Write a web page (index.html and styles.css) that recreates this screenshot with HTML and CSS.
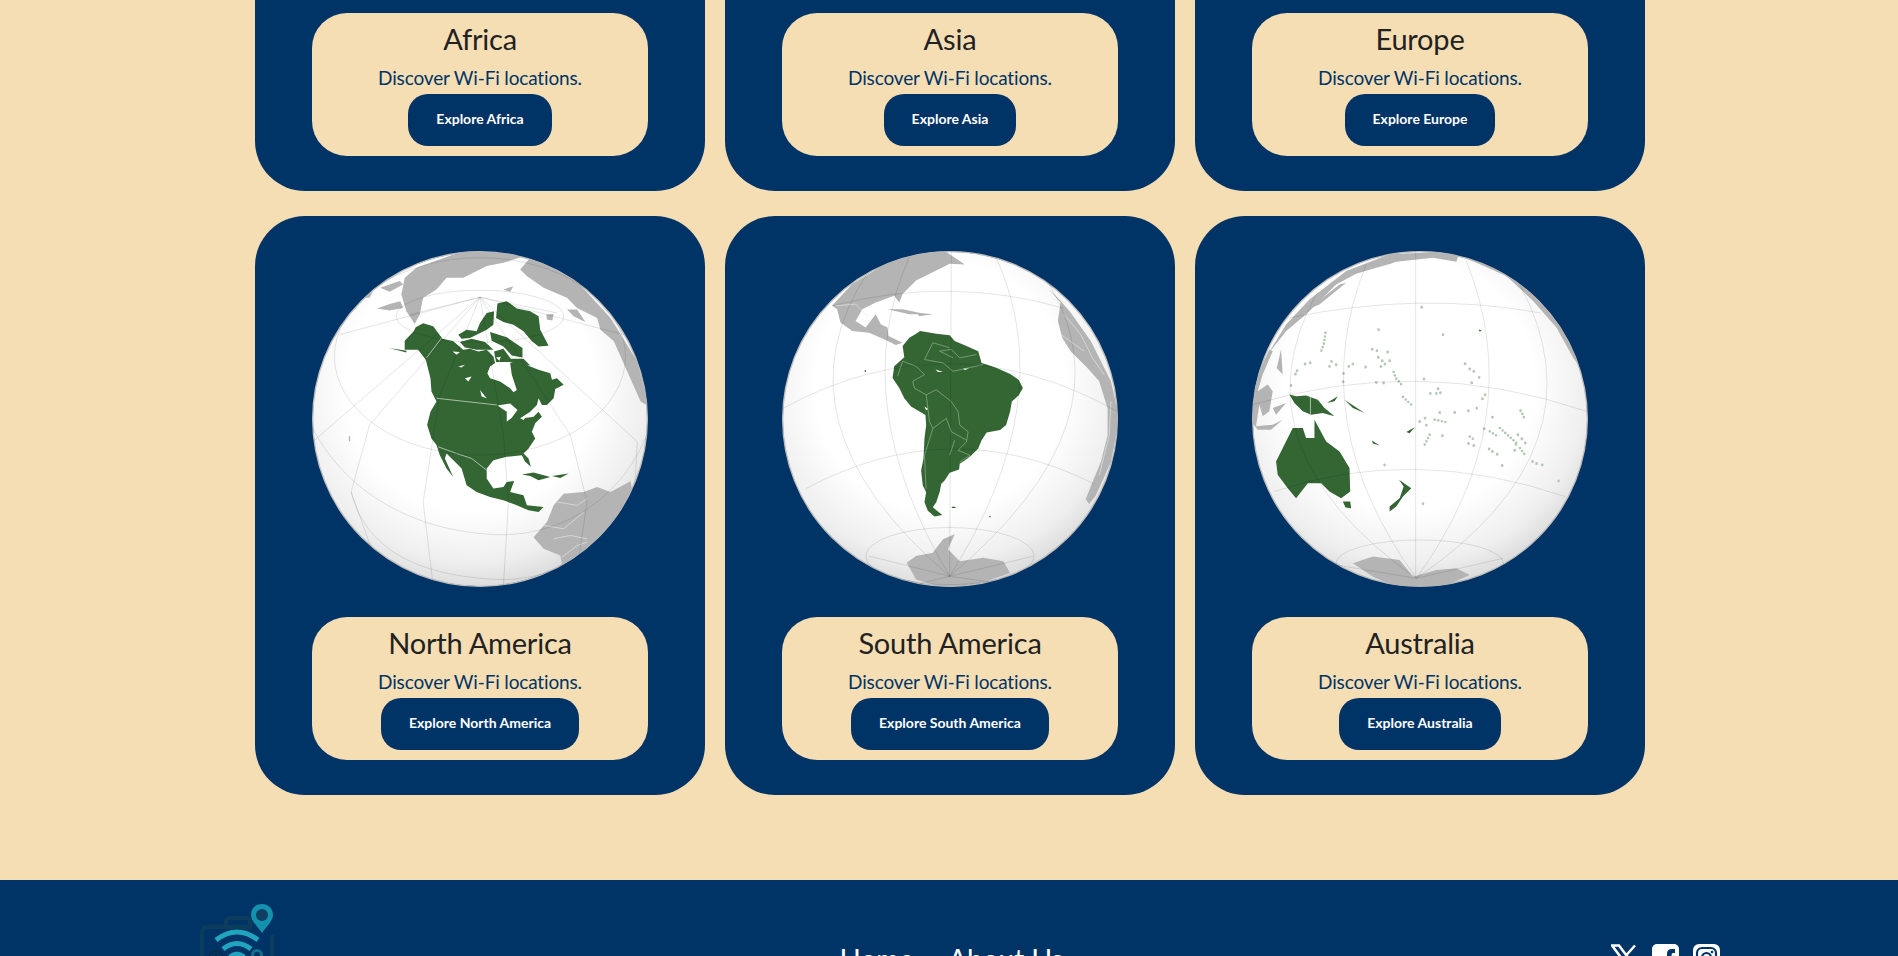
FILE: index.html
```html
<!DOCTYPE html>
<html lang="en">
<head>
    <meta charset="UTF-8">
    <meta name="viewport" content="width=device-width, initial-scale=1.0">
    <title>Wi-Fi Locations</title>
    <link rel="stylesheet" href="styles.css">
</head>
<body>

    <main class="regions">
        <div class="region-grid">

            <!-- top row, page is scrolled so the globes are out of view -->
            <div class="region-card">
                <div class="globe"></div>
                <div class="region-info">
                    <h3>Africa</h3>
                    <p>Discover Wi-Fi locations.</p>
                    <a class="explore-btn" href="#">Explore Africa</a>
                </div>
            </div>
            <div class="region-card">
                <div class="globe"></div>
                <div class="region-info">
                    <h3>Asia</h3>
                    <p>Discover Wi-Fi locations.</p>
                    <a class="explore-btn" href="#">Explore Asia</a>
                </div>
            </div>
            <div class="region-card">
                <div class="globe"></div>
                <div class="region-info">
                    <h3>Europe</h3>
                    <p>Discover Wi-Fi locations.</p>
                    <a class="explore-btn" href="#">Explore Europe</a>
                </div>
            </div>

            <!-- North America -->
            <div class="region-card">
                <svg class="globe" viewBox="68 50 1004 1004">
                    <defs>
                        <radialGradient id="sphere" cx="0.47" cy="0.4" r="0.62">
                            <stop offset="0.6" stop-color="#ffffff"/>
                            <stop offset="0.85" stop-color="#efefef"/>
                            <stop offset="1" stop-color="#d8d8d8"/>
                        </radialGradient>
                        <clipPath id="clipNa"><circle cx="570" cy="552" r="501"/></clipPath>
                    </defs>
                    <circle class="sphere" cx="570" cy="552" r="500"/>
                    <g clip-path="url(#clipNa)">
                        <path class="land-gray" d="M335 180L345 130L380 100L520 50L720 60L640 85L590 95L560 110L520 130L470 130L440 165L400 190L390 240L375 268L350 230Z"/>
                        <path class="land-gray" d="M262 222L300 208L332 200L340 220L300 228ZM272 160L330 140L340 150L300 172ZM220 190L250 170L240 190ZM640 165L670 155L660 172Z"/>
                        <path class="land-gray" d="M690 105L720 70L850 130L960 250L1040 380L1075 515L1050 500L1010 410L970 320L930 285L920 250L860 220L830 190L760 160L710 125ZM768 240L790 238L786 258L770 255ZM830 225L860 225L885 262L850 245Z"/>
                        <path class="land-gray" d="M1020 738L960 770L920 755L880 770L820 775L790 810L770 860L730 905L760 940L810 960L815 985L775 1012L900 1000L1030 800Z"/>
                        <path class="line-white" d="M800 800L860 810L890 790M760 870L820 880L880 830M790 910L840 900L890 910M815 965L860 930L890 920"/>
                        <path class="dots-gray" d="M180 605v12"/>

                        <path class="land-green" d="M345 318L372 290L378 278L400 266L430 275L445 295L458 312L490 320L520 345L540 342L565 350L590 345L610 365L615 385L600 395L592 415L600 430L630 440L660 460L670 472L680 465L665 420L660 385L680 378L700 385L720 395L745 405L780 415L785 435L800 430L820 450L795 462L790 490L770 510L755 510L745 490L740 510L720 530L700 550L730 545L745 530L755 545L735 565L725 590L735 610L715 640L700 655L715 670L722 695L705 680L695 660L650 665L610 675L590 700L590 730L610 760L640 755L650 740L672 737L660 770L700 780L710 810L760 815L745 830L715 825L680 810L640 795L600 785L560 770L530 750L515 700L495 680L470 655L465 670L490 725L470 700L450 660L440 630L425 610L412 570L422 530L440 500L425 470L422 430L408 375L385 345L345 345Z"/>
                        <path class="land-green" d="M298 340L350 348L350 353ZM505 300L530 285L560 290L570 265L590 235L612 230L610 270L590 285L560 300L540 310L515 312ZM510 322L545 312L585 322L610 345L560 345L525 338ZM600 292L650 308L697 340L697 368L665 362L640 335L605 318ZM612 350L640 342L662 372L700 372L720 392L660 382L618 382ZM622 207L650 200L680 222L720 230L745 245L750 285L775 333L745 335L725 320L700 290L670 270L640 262L618 250ZM695 718L730 712L780 725L745 735L720 722ZM785 722L835 715L810 728Z"/>
                        <path class="land-white" d="M622 512L660 506L682 525L665 548L650 560L650 530ZM488 350L510 352L500 360ZM505 395L525 390L515 398ZM570 465L590 490L575 485ZM690 550L720 530L700 555ZM525 430L545 425L535 440ZM618 368L632 366L628 378Z"/>
                        <path class="line-white" d="M455 310L410 370M440 490L620 510M445 635L500 655L545 670L590 705"/>

                        <path class="grid" d="M570 188L450 480L400 800L430 1050M570 188L640 600L655 800L640 1050M570 188L840 600L890 800L860 1000M570 188L240 570L185 770L260 980M570 188L360 240M570 188L800 235M570 188L150 300M570 188L1000 300M570 188L1040 620L1030 800M570 188L70 620"/>
                        <ellipse class="grid" cx="570" cy="245" rx="250" ry="78"/>
                        <ellipse class="grid" cx="570" cy="365" rx="435" ry="295"/>
                        <path class="grid" d="M70 580C180 790 400 895 640 898C830 895 1000 780 1072 590M185 770C230 950 400 1025 640 1032C800 1030 950 940 1030 800"/>
                    </g>
                </svg>
                <div class="region-info">
                    <h3>North America</h3>
                    <p>Discover Wi-Fi locations.</p>
                    <a class="explore-btn" href="#">Explore North America</a>
                </div>
            </div>

            <!-- South America -->
            <div class="region-card">
                <svg class="globe" viewBox="41 52 1000 1000">
                    <defs>
                        <clipPath id="clipSa"><circle cx="541" cy="552" r="499"/></clipPath>
                    </defs>
                    <circle class="sphere" cx="541" cy="552" r="498"/>
                    <g clip-path="url(#clipSa)">
                        <path class="land-gray" d="M190 215L250 150L350 90L450 50L530 55L585 92L540 90L500 110L440 140L400 180L390 205L375 185L320 205L280 225L260 260L290 280L320 240L335 270L355 280L358 305L400 325L380 332L345 315L300 295L250 290L215 265L205 225ZM355 225L400 225L470 240L420 240ZM440 235L490 240L450 246Z"/>
                        <path class="land-gray" d="M830 160L870 200L900 235L960 320L1020 440L1045 550L1020 680L975 780L955 805L945 790L965 740L990 680L1010 600L1010 520L985 440L950 400L900 350L875 310L862 260L870 205Z"/>
                        <path class="land-gray" d="M412 980L440 960L490 950L520 910L555 895L535 940L570 975L640 965L700 975L720 1010L650 1035L540 1060L440 1030Z"/>
                        <path class="line-white" d="M200 215L260 210L300 250M880 240L930 300L965 370L1000 420M1020 500L1015 600L985 720M870 300L940 350"/>

                        <path class="land-green" d="M452 290L470 293L500 298L540 303L555 320L590 335L625 350L635 385L650 390L680 400L720 418L745 435L758 460L745 482L725 500L720 530L708 570L690 585L650 592L635 615L625 640L605 660L590 672L570 685L568 702L540 712L525 735L515 745L510 770L500 800L490 815L518 838L495 842L475 825L465 800L470 770L460 750L455 705L462 670L465 610L470 570L468 540L425 515L405 490L390 460L370 430L375 395L405 368L400 335L420 310L440 298Z"/>
                        <path class="land-white" d="M465 515L476 522L470 526ZM498 405L520 412L505 412ZM580 402L598 402L585 406Z"/>
                        <path class="line-border" d="M400 380L440 395L465 420L430 440L435 460L470 480L500 465L545 500L565 530L570 570L595 590L590 620L565 645M470 480L480 560L490 580L465 660L470 760M490 580L530 550L545 590L590 615M540 660L555 615M565 645L600 660L570 680M465 375L490 325L540 340M465 375L520 385L550 410L640 390M550 370L510 350L545 345L570 370L620 360M400 380L385 425"/>

                        <path class="grid" d="M545 52L540 1020M420 70Q230 500 540 1020M680 75Q870 500 540 1020M300 110Q0 560 540 1020M830 140Q1090 560 540 1020M540 1020L300 960M540 1020L790 960M540 1020L420 1050M540 1020L680 1040"/>
                        <path class="grid" d="M45 520Q540 250 1040 530M110 760Q540 530 970 745M190 215Q540 125 880 222"/>
                        <ellipse class="grid" cx="541" cy="960" rx="250" ry="85"/>
                        <path class="dots-green" d="M289 408v2M548 815h8M660 842v1"/>
                    </g>
                </svg>
                <div class="region-info">
                    <h3>South America</h3>
                    <p>Discover Wi-Fi locations.</p>
                    <a class="explore-btn" href="#">Explore South America</a>
                </div>
            </div>

            <!-- Australia -->
            <div class="region-card">
                <svg class="globe" viewBox="38 50 1006 1006">
                    <defs>
                        <clipPath id="clipAu"><circle cx="541" cy="553" r="502"/></clipPath>
                    </defs>
                    <circle class="sphere" cx="541" cy="553" r="501"/>
                    <g clip-path="url(#clipAu)">
                        <path class="land-gray" d="M85 360L140 270L210 195L320 110L450 60L660 50L650 82L580 70L470 82L405 105L450 88L350 118L290 150L205 235L140 290Z"/>
                        <path class="land-gray" d="M650 60L800 90L930 210L1030 410L1000 370L950 280L880 200L800 125L720 90Z"/>
                        <path class="land-gray" d="M35 560L50 430L90 345L100 350L70 420L55 470L85 450L100 470L90 530L70 545L60 510L50 575L100 570L130 555L95 585L55 585Z"/>
                        <path class="land-gray" d="M112 400L125 345L130 420ZM100 520L140 505L110 540ZM205 225L300 150L320 145L240 210Z"/>
                        <path class="land-gray" d="M340 985L400 965L480 975L520 1025L590 1005L650 1000L690 1020L600 1060L480 1060L400 1025Z"/>

                        <path class="land-green" d="M110 680L135 630L160 580L190 580L200 610L225 610L225 555L260 620L300 650L330 700L332 770L305 790L270 770L245 745L205 745L170 790L145 760L115 720ZM310 800L332 800L335 820L318 818ZM150 480L170 485L200 483L235 495L255 520L285 545L250 535L215 540L190 530L165 505ZM262 505L295 485L285 500ZM478 735L515 760L490 785L470 815L450 830L450 815L480 790L492 755ZM500 592L525 578L510 596ZM397 617L420 632L400 626ZM315 495L375 535L340 520ZM716 285L726 288L720 292Z"/>
                        <path class="line-white" d="M213 485L213 540"/>

                        <path class="dots-run" d="M258 295L254 325L245 350M462 412L468 430L490 455M490 487L520 515M585 555L622 563M570 600L555 630M690 606L708 618M750 590L770 603M780 580L830 625M842 528L855 553M840 640L855 660"/>
                        <path class="dots-pale" d="M173 408v1M168 418v1M212 384v1M197 388v1M276 380v1M270 395v1M290 390v1M312 416v1M328 395v1M340 388v1M378 397v1M311 441v1M410 443v1M432 445v1M398 344v1M412 348v1M417 285v1M444 352v1M416 368v1M428 378v1M450 378v1M436 388v1M424 395v1M553 433v1M595 462v1M572 476v1M590 476v1M602 474v1M676 387v1M690 403v1M702 410v1M718 428v1M696 444v1M736 480v1M728 492v1M711 520v1M686 528v1M645 533v1M600 533v1M540 560v1M556 550v1M560 571v1M608 603v1M686 626v1M702 632v1M748 642v1M758 650v1M772 658v1M758 547v1M733 582v1M828 628v1M856 624v1M834 600v1M846 612v1M825 646v1M878 680v1M890 686v1M907 690v1M787 692v1M956 738v1M435 690v1M610 300v1M546 218v1M550 806v1M155 452v1"/>

                        <path class="grid" d="M528 50L528 1025M380 90Q190 560 530 1030M680 80Q870 560 530 1030M230 180Q-20 640 530 1030M840 150Q1100 640 530 1030M530 1030L290 990M530 1030L790 970"/>
                        <path class="grid" d="M150 250Q540 170 900 235M40 510Q540 360 1040 530M105 770Q520 630 975 785"/>
                        <ellipse class="grid" cx="540" cy="985" rx="250" ry="70"/>
                    </g>
                </svg>
                <div class="region-info">
                    <h3>Australia</h3>
                    <p>Discover Wi-Fi locations.</p>
                    <a class="explore-btn" href="#">Explore Australia</a>
                </div>
            </div>

        </div>
    </main>

    <footer class="site-footer">
        <!-- logo: suitcase with wifi and pin -->
        <svg class="footer-logo" viewBox="200 904 74 112">
            <path class="logo-case" d="M226 927V922Q226 918 230 918H246Q250 918 250 922V927M252 927H208Q202 927 202 933V1000Q202 1006 208 1006H266Q272 1006 272 1000V935"/>
            <path class="logo-wave" d="M216 940Q237 924 258 940M223 949Q237 938 251 949M230 957Q237 951 244 957"/>
            <circle class="logo-small-globe" cx="216" cy="958" r="7"/>
            <path class="logo-small-globe" d="M209 958H223M216 951V965"/>
            <circle class="logo-dot" cx="257" cy="955" r="4.500"/>
            <path class="logo-pin" d="M262 904C269 904 273 909 273 915C273 921 266 927 262 933C258 927 251 921 251 915C251 909 255 904 262 904Z"/>
            <circle class="logo-pin-hole" cx="262" cy="915" r="6"/>
        </svg>

        <nav class="footer-nav">
            <a href="#">Home</a>
            <a href="#">About Us</a>
        </nav>

        <div class="footer-social">
            <svg viewBox="0 0 27 27">
                <path class="x-mark" d="M1 1.500H8L26 25.500H19ZM24 1.500L14.500 12M12 15L2 25.500"/>
            </svg>
            <svg viewBox="0 0 27 27">
                <rect class="icon-box" width="27" height="27" rx="5"/>
                <path class="icon-cut" d="M15 27V17H11.500V13H15V10Q15 5 20 5H23V9H21Q19.500 9 19.500 11V13H23L22.500 17H19.500V27Z"/>
            </svg>
            <svg viewBox="0 0 27 27">
                <rect class="icon-box" width="27" height="27" rx="6"/>
                <rect class="icon-line" x="4" y="4" width="19" height="19" rx="5"/>
                <circle class="icon-line" cx="13.500" cy="13.500" r="4.500"/>
                <circle class="icon-cut" cx="19" cy="8" r="1.300"/>
            </svg>
        </div>
    </footer>

</body>
</html>
```

FILE: styles.css
```css
body {
    margin: 0;
    height: 956px;
    overflow: hidden;
    background-color: #f5deb3;
    font-family: "Lato", "Noto Sans", sans-serif;
}

.regions {
    display: flex;
    justify-content: center;
    padding: 0 0 85px 2px;
    margin-top: -388px;
}

.region-grid {
    display: grid;
    grid-template-columns: repeat(3, 450px);
    column-gap: 20px;
    row-gap: 25px;
}

.region-card {
    display: flex;
    flex-direction: column;
    align-items: center;
    padding: 35px 57px;
    background-color: #003366;
    border-radius: 50px;
}

.globe {
    display: block;
    width: 336px;
    height: 336px;
    margin-bottom: 30px;
}

.region-info {
    box-sizing: border-box;
    width: 336px;
    height: 143px;
    padding-top: 7px;
    text-align: center;
    background-color: #f5deb3;
    border-radius: 35px;
}

.region-info h3 {
    margin: 0;
    font-size: 29px;
    line-height: 38px;
    font-weight: 400;
    letter-spacing: -0.2px;
    color: #222222;
}

.region-info p {
    margin: 8px 0 4px;
    font-size: 19px;
    line-height: 24px;
    letter-spacing: -0.15px;
    color: #003366;
}

.explore-btn {
    display: inline-block;
    padding: 0 28px 2px;
    font-size: 14px;
    font-weight: bold;
    line-height: 50px;
    color: #ffffff;
    text-decoration: none;
    background-color: #003366;
    border-radius: 20px;
}

/* globe drawing */
.sphere {
    fill: url(#sphere);
    stroke: #bdbdbd;
    stroke-width: 4;
}

.land-gray {
    fill: #b4b4b4;
}

.land-green {
    fill: #336633;
}

.land-white {
    fill: #ffffff;
}

.line-white {
    fill: none;
    stroke: #e6e6e6;
    stroke-width: 2;
}

.line-border {
    fill: none;
    stroke: #b9cbb9;
    stroke-width: 1.500;
}

.grid {
    fill: none;
    stroke: #000000;
    stroke-opacity: 0.16;
    stroke-width: 2;
}

.dots-pale, .dots-run, .dots-green, .dots-gray {
    fill: none;
    stroke-linecap: round;
}

.dots-pale, .dots-run {
    stroke: #b3c9b3;
    stroke-width: 8;
}

.dots-run {
    stroke-dasharray: 0 11;
}

.dots-green {
    stroke: #336633;
    stroke-width: 4;
}

.dots-gray {
    stroke: #b4b4b4;
    stroke-width: 4;
}

/* footer */
.site-footer {
    box-sizing: border-box;
    display: flex;
    justify-content: space-between;
    align-items: flex-start;
    height: 76px;
    padding: 24px 178px 0 200px;
    overflow: hidden;
    background-color: #003366;
}

.footer-logo {
    flex-shrink: 0;
    width: 74px;
    height: 112px;
}

.logo-case {
    fill: none;
    stroke: #0d3d5c;
    stroke-width: 4;
}

.logo-wave {
    fill: none;
    stroke: #1fa5bd;
    stroke-width: 5;
}

.logo-small-globe {
    fill: none;
    stroke: #0b2a45;
    stroke-width: 1.500;
}

.logo-dot {
    fill: none;
    stroke: #14708c;
    stroke-width: 3;
}

.logo-pin {
    fill: #1491ad;
}

.logo-pin-hole {
    fill: #0f3f63;
}

.footer-nav {
    display: flex;
    gap: 34px;
    margin: 35px 0 0 18px;
}

.footer-nav a {
    font-size: 28px;
    line-height: 40px;
    color: #ffffff;
    text-decoration: none;
}

.footer-social {
    display: flex;
    gap: 14px;
    margin-top: 40px;
}

.footer-social svg {
    width: 27px;
    height: 27px;
}

.x-mark {
    fill: none;
    stroke: #ffffff;
    stroke-width: 2.500;
}

.icon-box {
    fill: #ffffff;
}

.icon-cut {
    fill: #003366;
}

.icon-line {
    fill: none;
    stroke: #003366;
    stroke-width: 2.200;
}
```
